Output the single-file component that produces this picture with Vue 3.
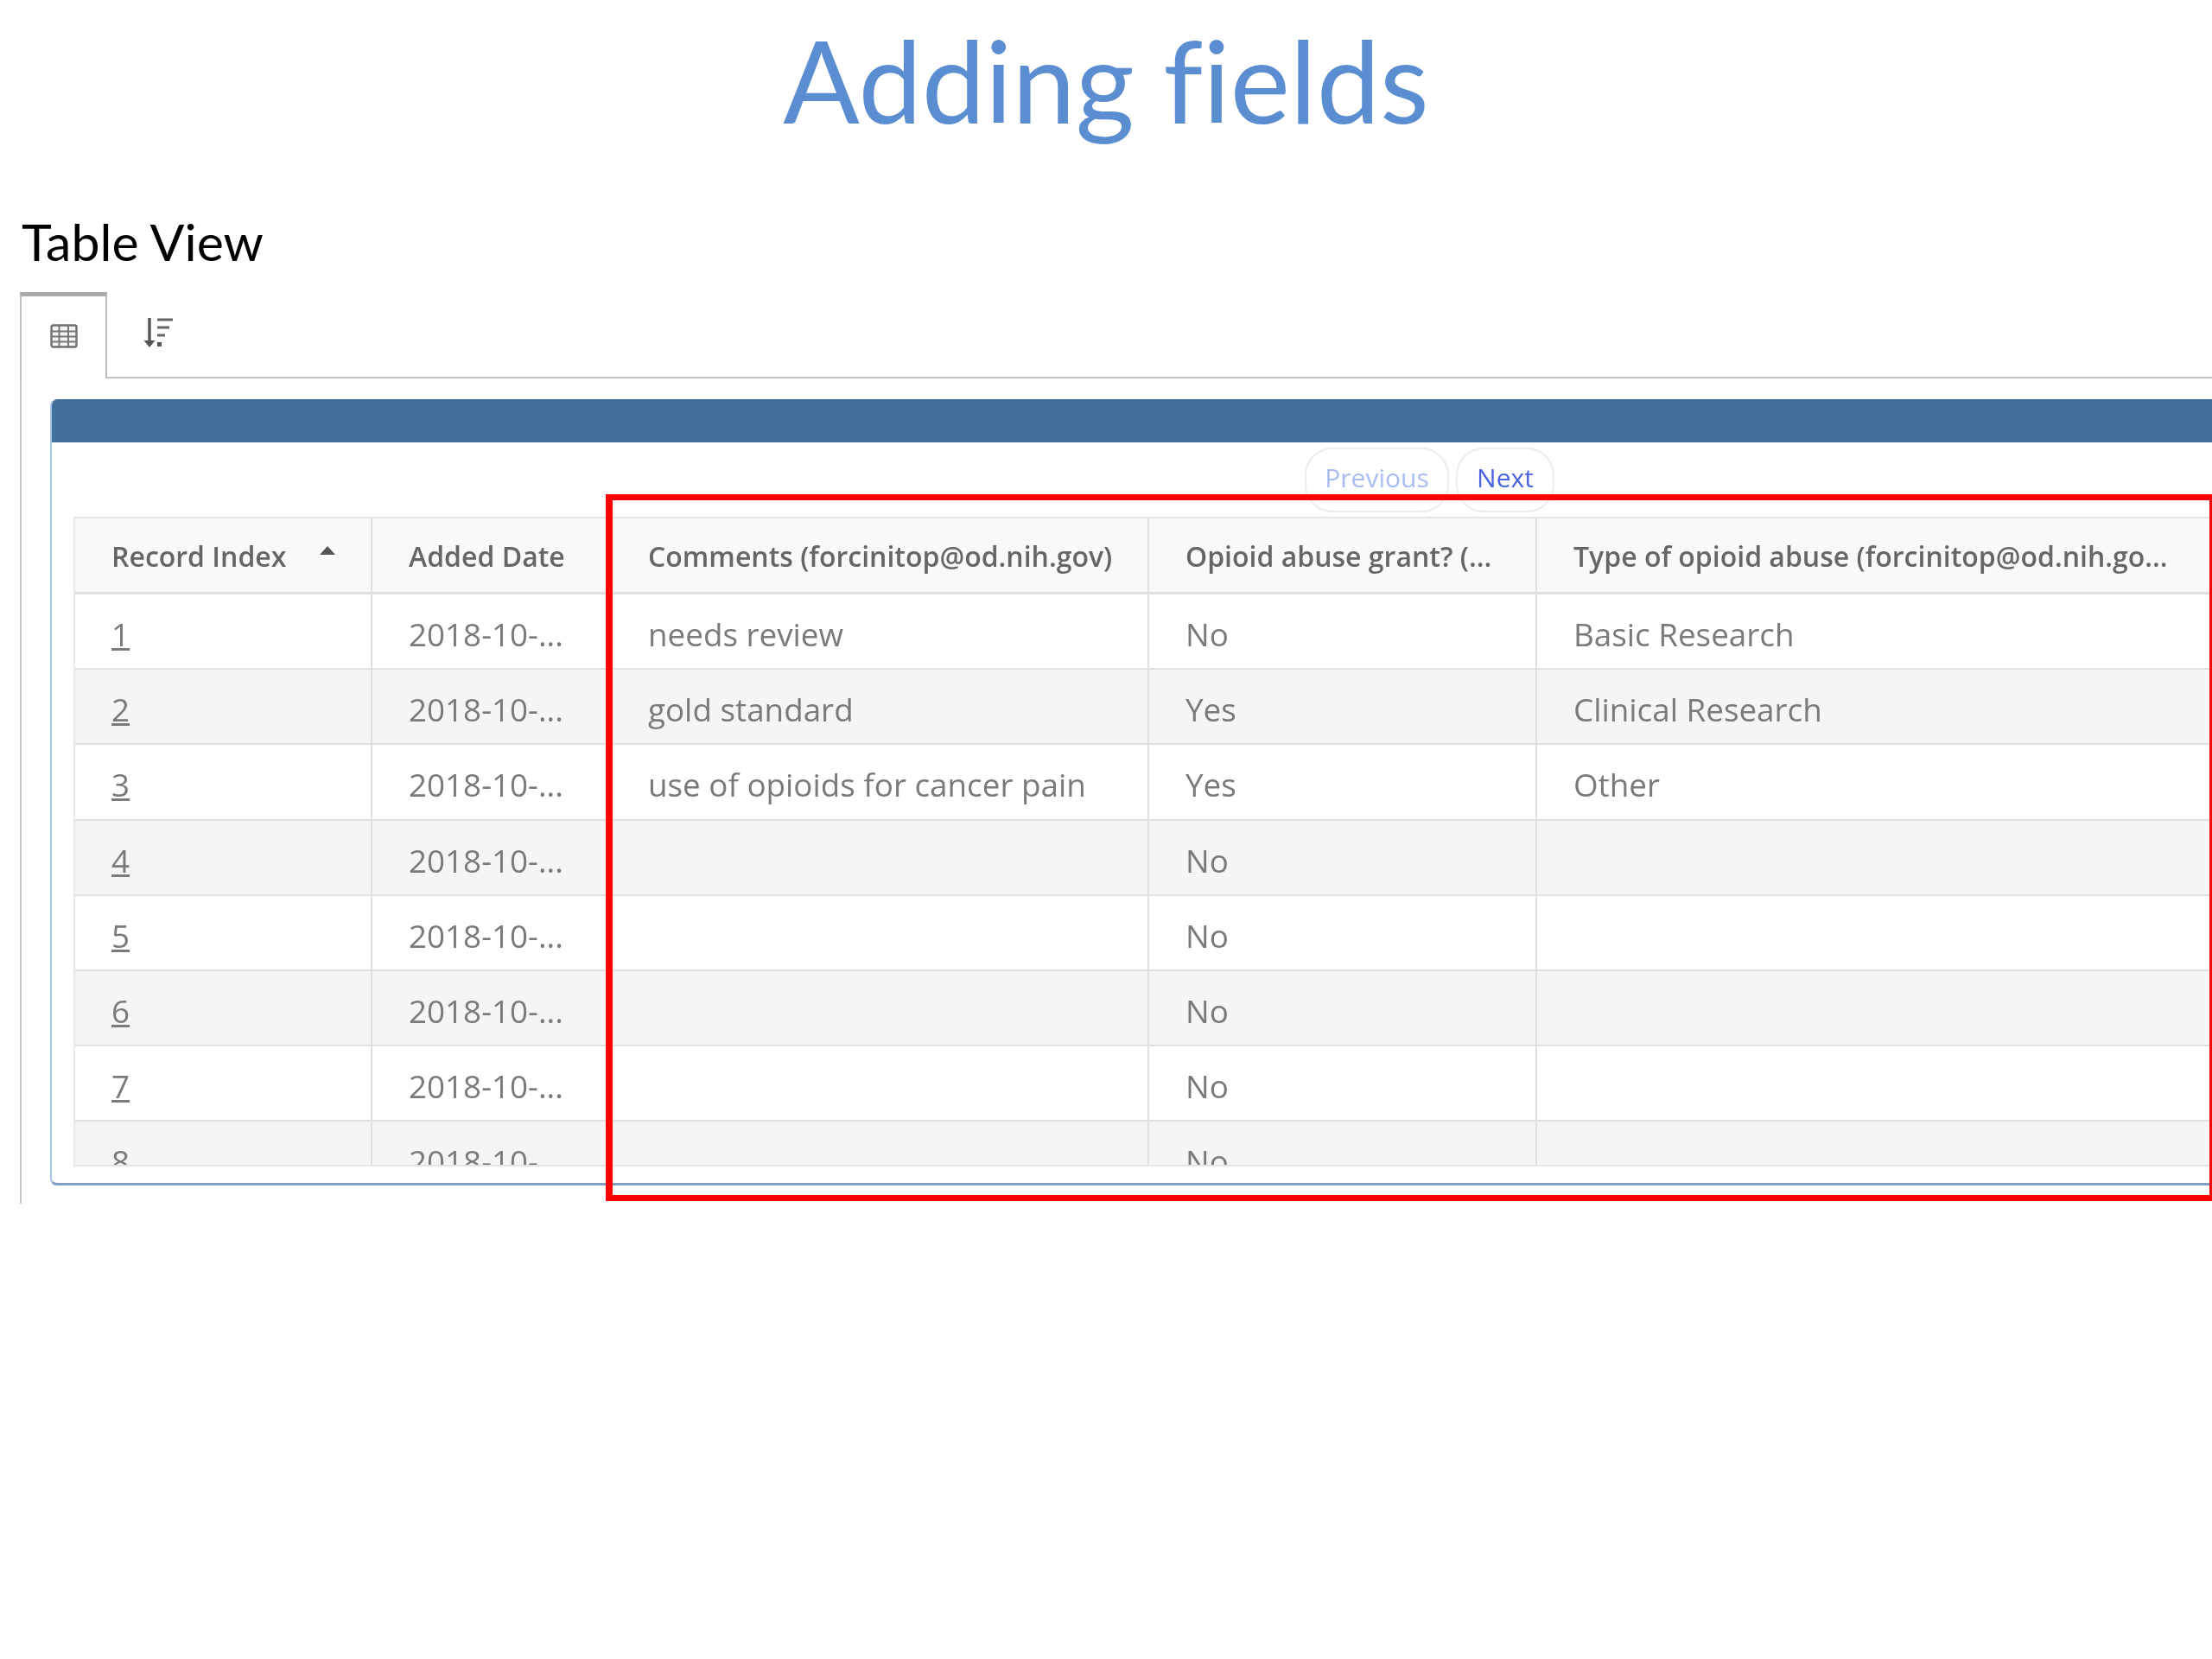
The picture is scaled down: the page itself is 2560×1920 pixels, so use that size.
<script setup>
const columns = [
  'Record Index',
  'Added Date',
  'Comments (forcinitop@od.nih.gov)',
  'Opioid abuse grant? (...',
  'Type of opioid abuse (forcinitop@od.nih.go...'
]
const rows = [
  ['1', 'needs review', 'No', 'Basic Research'],
  ['2', 'gold standard', 'Yes', 'Clinical Research'],
  ['3', 'use of opioids for cancer pain', 'Yes', 'Other'],
  ['4', '', 'No', ''],
  ['5', '', 'No', ''],
  ['6', '', 'No', ''],
  ['7', '', 'No', ''],
  ['8', '', 'No', '']
]
</script>

<template>
  <div class="page">
    <h1 class="title">Adding fields</h1>
    <h2 class="subtitle">Table View</h2>

    <div class="tabs">
      <div class="tab active">
        <svg width="32" height="28" viewBox="0 0 32 28">
          <rect x="1.5" y="1.5" width="29" height="25" rx="2" fill="#f4f4f4" stroke="#6f6f6f" stroke-width="2.4" />
          <path d="M1 8.5H31M1 14.5H31M1 20.5H31M10.5 2V26M21 2V26" stroke="#777" stroke-width="2" fill="none" />
        </svg>
      </div>
      <div class="tab">
        <svg width="36" height="36" viewBox="0 0 36 36">
          <path d="M8 1V31" stroke="#555" stroke-width="3.4" fill="none" />
          <path d="M1.5 27H14.5L8 35Z" fill="#555" />
          <path d="M17 3H35M17 12H31M17 21H26" stroke="#666" stroke-width="3" fill="none" />
          <rect x="17" y="29" width="5" height="5" fill="#555" />
        </svg>
      </div>
      <div class="tab-rest"></div>
    </div>

    <div class="tab-body">
      <section class="panel">
        <div class="panel-head"></div>
        <nav class="pager">
          <span class="pill previous">Previous</span>
          <span class="pill next">Next</span>
        </nav>
        <div class="table-wrap">
          <div class="row head">
            <div v-for="(c, i) in columns" :key="c" class="cell">
              {{ c }}
              <i v-if="i === 0" class="caret"></i>
            </div>
          </div>
          <div v-for="(r, i) in rows" :key="r[0]" class="row" :class="{ odd: i % 2 === 1 }">
            <div class="cell"><u>{{ r[0] }}</u></div>
            <div class="cell">2018-10-...</div>
            <div class="cell">{{ r[1] }}</div>
            <div class="cell">{{ r[2] }}</div>
            <div class="cell">{{ r[3] }}</div>
          </div>
        </div>
      </section>
    </div>

    <div class="highlight"></div>
  </div>
</template>

<style>
html, body { margin: 0; background: #fff; }
</style>

<style scoped>
.page {
  position: relative;
  width: 2560px;
  height: 1920px;
  overflow: hidden;
  background: #fff;
  font-family: "Open Sans", sans-serif;
  filter: blur(0.7px);
}
.title {
  margin: 0;
  height: 186px;
  text-align: center;
  font: 400 131px/186px Lato, sans-serif;
  font-variant-ligatures: none;
  color: #5b8ed0;
}
.subtitle {
  margin: 59px 0 0 25px;
  height: 93px;
  font: 400 59px/70px Lato, sans-serif;
  color: #000;
}
.tabs {
  display: flex;
  height: 100px;
  margin-left: 23px;
}
.tab {
  box-sizing: border-box;
  width: 101px;
  display: flex;
  align-items: center;
  justify-content: center;
  padding-bottom: 4px;
  border-bottom: 2px solid #c4c4c4;
}
.tab.active {
  border: solid #bdbdbd;
  border-width: 5px 2px 0;
  border-top-color: #ababab;
}
.tab:not(.active) {
  width: 118px;
  padding-bottom: 4px;
}
.tab-rest {
  flex: 1;
  border-bottom: 2px solid #c4c4c4;
}
.tab-body {
  box-sizing: border-box;
  height: 955px;
  margin-left: 23px;
  padding: 24px 0 0 33px;
  border-left: 2px solid #c8c8c8;
}
.panel {
  box-sizing: border-box;
  height: 910px;
  border: solid #a9c3e2;
  border-width: 0 0 3px 2px;
  border-bottom-color: #7f9fc6;
  border-radius: 8px 0 0 8px;
  overflow: hidden;
}
.panel-head {
  height: 50px;
  background: #436e9b;
}
.pager {
  display: flex;
  gap: 8px;
  height: 86px;
  padding: 6px 0 0 1450px;
  box-sizing: border-box;
}
.pill {
  box-sizing: border-box;
  height: 75px;
  padding-bottom: 6px;
  display: flex;
  align-items: center;
  justify-content: center;
  border: 2px solid #ececec;
  border-radius: 32px;
  font-size: 30px;
}
.previous { width: 167px; color: #a9bdf2; }
.next { width: 114px; color: #4a63e0; }
.table-wrap {
  margin-left: 25px;
  height: 752px;
  overflow: hidden;
  border-top: 2px solid #e4e4e4;
  border-left: 2px solid #e8e8e8;
  border-bottom: 2px solid #e4e4e4;
  box-sizing: border-box;
}
.row {
  display: grid;
  grid-template-columns: 344px 277px 622px 449px 800px;
  height: 87.2px;
  box-sizing: border-box;
  border-bottom: 2px solid #e0e0e0;
  color: #7a7a7a;
  font-size: 36.8px;
}
.row.head {
  height: 88px;
  background: #f9f9f9;
  font-size: 32px;
  font-weight: 600;
  color: #666;
  border-bottom-width: 3px;
}
.row.odd { background: #f5f5f5; }
.cell {
  position: relative;
  box-sizing: border-box;
  padding: 7px 0 0 42px;
  display: flex;
  align-items: center;
  white-space: nowrap;
  border-right: 2px solid #e0e0e0;
}
.head .cell { padding-top: 2px; }
.cell:last-child { border-right: 0; }
.caret {
  position: absolute;
  left: 283px;
  top: 32px;
  width: 0;
  height: 0;
  border: solid transparent;
  border-width: 0 9px 10px;
  border-bottom-color: #555;
}
.highlight {
  position: absolute;
  left: 701px;
  top: 572px;
  width: 1859px;
  height: 818px;
  box-sizing: border-box;
  border: solid #f00;
  border-width: 7px 3px 7px 8px;
}
</style>
